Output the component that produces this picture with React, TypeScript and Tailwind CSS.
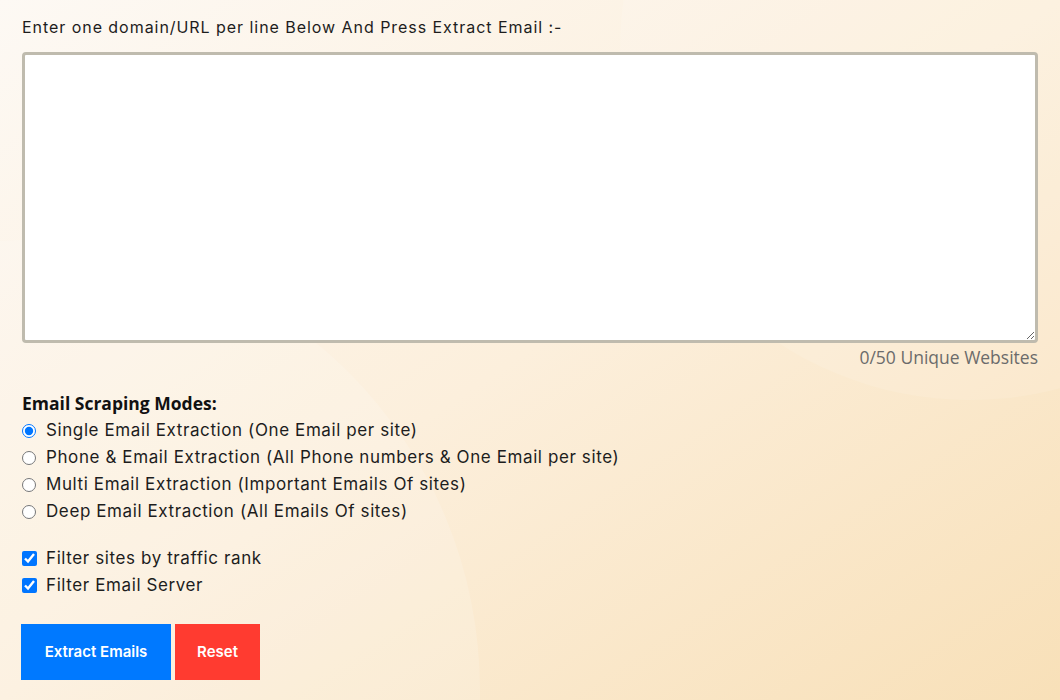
import React, { useState } from 'react';

const modes = [
  "Single Email Extraction (One Email per site)",
  "Phone & Email Extraction (All Phone numbers & One Email per site)",
  "Multi Email Extraction (Important Emails Of sites)",
  "Deep Email Extraction (All Emails Of sites)",
];

const App: React.FC = () => {
  const [mode, setMode] = useState(0);
  const [urls, setUrls] = useState("");
  const [filters, setFilters] = useState({ traffic: true, server: true });

  return (
    <div className="relative min-h-[700px] w-full overflow-hidden bg-gradient-to-br from-[#fdf9f4] via-[#fcefdc] to-[#f8e0b8] font-['Inter','Noto_Sans',sans-serif] text-[#1d1d1d]">
      {/* soft background curves */}
      <div className="pointer-events-none absolute -left-[420px] top-[240px] h-[900px] w-[900px] rounded-full bg-white/15" />
      <div className="pointer-events-none absolute left-[620px] -top-[300px] h-[700px] w-[700px] rounded-full bg-white/10" />

      <div className="relative px-[22px] pt-[15px]">
        <p className="text-[16px] leading-[24px] tracking-[0.95px]">Enter one domain/URL per line Below And Press Extract Email :-</p>

        <textarea
          value={urls}
          onChange={(e) => setUrls(e.target.value)}
          className="mt-[13px] block h-[291px] w-full rounded-[4px] border-[3px] border-[#bfbbae] bg-white p-2 outline-none"
        />
        <div className="mt-[3px] text-right font-['Open_Sans',sans-serif] text-[17.5px] leading-[22px] text-[#6b6b6b]">0/50 Unique Websites</div>

        <div className="mt-[24px] font-['Open_Sans',sans-serif] text-[17.5px] font-bold leading-[22px] text-[#111]">Email Scraping Modes:</div>
        <div className="mt-[3px] flex flex-col">
          {modes.map((m, i) => (
            <label key={i} className="flex h-[27px] items-center gap-[10px] text-[17px] tracking-[0.6px]">
              <input type="radio" name="mode" checked={mode === i} onChange={() => setMode(i)} className="m-0 h-[14px] w-[14px] accent-[#0075ff]" />
              <span>{m}</span>
            </label>
          ))}
        </div>

        <div className="mt-[20px] flex flex-col">
          <label className="flex h-[27px] items-center gap-[9px] text-[17px] tracking-[0.6px]">
            <input type="checkbox" checked={filters.traffic} onChange={() => setFilters({ ...filters, traffic: !filters.traffic })} className="m-0 h-[15px] w-[15px] accent-[#0075ff]" />
            <span>Filter sites by traffic rank</span>
          </label>
          <label className="flex h-[27px] items-center gap-[9px] text-[17px] tracking-[0.6px]">
            <input type="checkbox" checked={filters.server} onChange={() => setFilters({ ...filters, server: !filters.server })} className="m-0 h-[15px] w-[15px] accent-[#0075ff]" />
            <span>Filter Email Server</span>
          </label>
        </div>

        <div className="mt-[25px] flex gap-[4px]">
          <button className="h-[56px] w-[150px] -ml-px bg-[#0079ff] text-[15px] font-semibold text-white">Extract Emails</button>
          <button onClick={() => setUrls("")} className="h-[56px] w-[85px] bg-[#ff3b30] text-[15px] font-semibold text-white">Reset</button>
        </div>
      </div>
    </div>
  );
};

export default App;
